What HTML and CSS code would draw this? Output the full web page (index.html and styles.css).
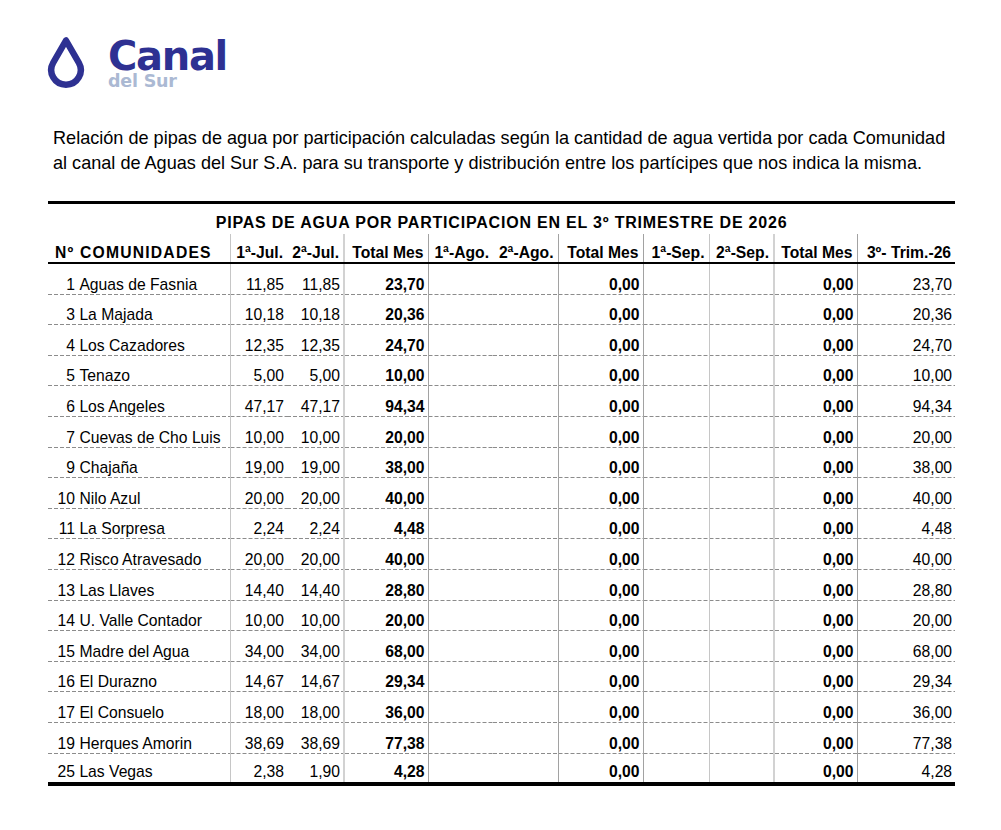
FILE: index.html
```html
<!DOCTYPE html>
<html lang="es">
<head>
<meta charset="utf-8">
<title>Canal del Sur - Pipas de agua por participación</title>
<link rel="stylesheet" href="styles.css">
</head>
<body>
<div class="page">
  <header class="logo">
    <svg class="drop" width="38" height="52" viewBox="0 0 38 52" aria-hidden="true">
      <path d="M19 3.5 L6.16 25.75 A14.75 14.75 0 1 0 31.84 25.75 Z" fill="none" stroke="#2e3192" stroke-width="6.5" stroke-linejoin="round"/>
    </svg>
    <div class="brand">
      <div class="brand-name">Canal</div>
      <div class="brand-sub">del Sur</div>
    </div>
  </header>

  <p class="intro">Relación de pipas de agua por participación calculadas según la cantidad de agua vertida por cada Comunidad<br>al canal de Aguas del Sur S.A. para su transporte y distribución entre los partícipes que nos indica la misma.</p>

  <table class="report">
    <colgroup>
      <col class="c-name"><col class="c-q"><col class="c-q"><col class="c-t">
      <col class="c-q2"><col class="c-q2"><col class="c-t2">
      <col class="c-q3"><col class="c-q2"><col class="c-t3"><col class="c-trim">
    </colgroup>
    <thead>
      <tr class="title-row"><th colspan="11">PIPAS DE AGUA POR PARTICIPACION EN EL 3º TRIMESTRE DE 2026</th></tr>
      <tr class="head-row">
        <th class="name-h">Nº COMUNIDADES</th>
        <th class="l-light">1ª-Jul.</th>
        <th>2ª-Jul.</th>
        <th class="l-thick">Total Mes</th>
        <th class="l-dark">1ª-Ago.</th>
        <th>2ª-Ago.</th>
        <th class="l-dark">Total Mes</th>
        <th class="l-dark">1ª-Sep.</th>
        <th class="l-light">2ª-Sep.</th>
        <th class="l-thick">Total Mes</th>
        <th class="l-dark">3º- Trim.-26</th>
      </tr>
    </thead>
    <tbody>
      <tr><td class="name"><span class="num">1</span>Aguas de Fasnia</td><td class="l-light">11,85</td><td>11,85</td><td class="l-thick b">23,70</td><td class="l-dark"></td><td></td><td class="l-dark b">0,00</td><td class="l-dark"></td><td class="l-light"></td><td class="l-thick b">0,00</td><td class="l-dark">23,70</td></tr>
      <tr><td class="name"><span class="num">3</span>La Majada</td><td class="l-light">10,18</td><td>10,18</td><td class="l-thick b">20,36</td><td class="l-dark"></td><td></td><td class="l-dark b">0,00</td><td class="l-dark"></td><td class="l-light"></td><td class="l-thick b">0,00</td><td class="l-dark">20,36</td></tr>
      <tr><td class="name"><span class="num">4</span>Los Cazadores</td><td class="l-light">12,35</td><td>12,35</td><td class="l-thick b">24,70</td><td class="l-dark"></td><td></td><td class="l-dark b">0,00</td><td class="l-dark"></td><td class="l-light"></td><td class="l-thick b">0,00</td><td class="l-dark">24,70</td></tr>
      <tr><td class="name"><span class="num">5</span>Tenazo</td><td class="l-light">5,00</td><td>5,00</td><td class="l-thick b">10,00</td><td class="l-dark"></td><td></td><td class="l-dark b">0,00</td><td class="l-dark"></td><td class="l-light"></td><td class="l-thick b">0,00</td><td class="l-dark">10,00</td></tr>
      <tr><td class="name"><span class="num">6</span>Los Angeles</td><td class="l-light">47,17</td><td>47,17</td><td class="l-thick b">94,34</td><td class="l-dark"></td><td></td><td class="l-dark b">0,00</td><td class="l-dark"></td><td class="l-light"></td><td class="l-thick b">0,00</td><td class="l-dark">94,34</td></tr>
      <tr><td class="name"><span class="num">7</span>Cuevas de Cho Luis</td><td class="l-light">10,00</td><td>10,00</td><td class="l-thick b">20,00</td><td class="l-dark"></td><td></td><td class="l-dark b">0,00</td><td class="l-dark"></td><td class="l-light"></td><td class="l-thick b">0,00</td><td class="l-dark">20,00</td></tr>
      <tr><td class="name"><span class="num">9</span>Chajaña</td><td class="l-light">19,00</td><td>19,00</td><td class="l-thick b">38,00</td><td class="l-dark"></td><td></td><td class="l-dark b">0,00</td><td class="l-dark"></td><td class="l-light"></td><td class="l-thick b">0,00</td><td class="l-dark">38,00</td></tr>
      <tr><td class="name"><span class="num">10</span>Nilo Azul</td><td class="l-light">20,00</td><td>20,00</td><td class="l-thick b">40,00</td><td class="l-dark"></td><td></td><td class="l-dark b">0,00</td><td class="l-dark"></td><td class="l-light"></td><td class="l-thick b">0,00</td><td class="l-dark">40,00</td></tr>
      <tr><td class="name"><span class="num">11</span>La Sorpresa</td><td class="l-light">2,24</td><td>2,24</td><td class="l-thick b">4,48</td><td class="l-dark"></td><td></td><td class="l-dark b">0,00</td><td class="l-dark"></td><td class="l-light"></td><td class="l-thick b">0,00</td><td class="l-dark">4,48</td></tr>
      <tr><td class="name"><span class="num">12</span>Risco Atravesado</td><td class="l-light">20,00</td><td>20,00</td><td class="l-thick b">40,00</td><td class="l-dark"></td><td></td><td class="l-dark b">0,00</td><td class="l-dark"></td><td class="l-light"></td><td class="l-thick b">0,00</td><td class="l-dark">40,00</td></tr>
      <tr><td class="name"><span class="num">13</span>Las Llaves</td><td class="l-light">14,40</td><td>14,40</td><td class="l-thick b">28,80</td><td class="l-dark"></td><td></td><td class="l-dark b">0,00</td><td class="l-dark"></td><td class="l-light"></td><td class="l-thick b">0,00</td><td class="l-dark">28,80</td></tr>
      <tr><td class="name"><span class="num">14</span>U. Valle Contador</td><td class="l-light">10,00</td><td>10,00</td><td class="l-thick b">20,00</td><td class="l-dark"></td><td></td><td class="l-dark b">0,00</td><td class="l-dark"></td><td class="l-light"></td><td class="l-thick b">0,00</td><td class="l-dark">20,00</td></tr>
      <tr><td class="name"><span class="num">15</span>Madre del Agua</td><td class="l-light">34,00</td><td>34,00</td><td class="l-thick b">68,00</td><td class="l-dark"></td><td></td><td class="l-dark b">0,00</td><td class="l-dark"></td><td class="l-light"></td><td class="l-thick b">0,00</td><td class="l-dark">68,00</td></tr>
      <tr><td class="name"><span class="num">16</span>El Durazno</td><td class="l-light">14,67</td><td>14,67</td><td class="l-thick b">29,34</td><td class="l-dark"></td><td></td><td class="l-dark b">0,00</td><td class="l-dark"></td><td class="l-light"></td><td class="l-thick b">0,00</td><td class="l-dark">29,34</td></tr>
      <tr><td class="name"><span class="num">17</span>El Consuelo</td><td class="l-light">18,00</td><td>18,00</td><td class="l-thick b">36,00</td><td class="l-dark"></td><td></td><td class="l-dark b">0,00</td><td class="l-dark"></td><td class="l-light"></td><td class="l-thick b">0,00</td><td class="l-dark">36,00</td></tr>
      <tr><td class="name"><span class="num">19</span>Herques Amorin</td><td class="l-light">38,69</td><td>38,69</td><td class="l-thick b">77,38</td><td class="l-dark"></td><td></td><td class="l-dark b">0,00</td><td class="l-dark"></td><td class="l-light"></td><td class="l-thick b">0,00</td><td class="l-dark">77,38</td></tr>
      <tr class="last"><td class="name"><span class="num">25</span>Las Vegas</td><td class="l-light">2,38</td><td>1,90</td><td class="l-thick b">4,28</td><td class="l-dark"></td><td></td><td class="l-dark b">0,00</td><td class="l-dark"></td><td class="l-light"></td><td class="l-thick b">0,00</td><td class="l-dark">4,28</td></tr>
    </tbody>
  </table>
</div>
</body>
</html>
```

FILE: styles.css
```css
html, body {
  margin: 0;
  padding: 0;
  background: #fff;
}

body {
  font-family: "Liberation Sans", Arial, sans-serif;
  color: #000;
}

.page {
  padding: 37px 0 0 48px;
}

/* ---------- logo ---------- */
.logo {
  display: flex;
  align-items: flex-start;
  gap: 23px;
  margin-left: -1px;
  height: 52px;
}

.drop {
  display: block;
  flex: none;
}

.brand {
  margin-top: 2px;
  font-family: "DejaVu Sans", sans-serif;
  font-weight: bold;
}

.brand-name {
  font-size: 40px;
  line-height: 34px;
  letter-spacing: -1.3px;
  color: #2e3192;
}

.brand-sub {
  font-size: 17.5px;
  line-height: 16px;
  color: #abb9d3;
  letter-spacing: -0.2px;
}

/* ---------- intro ---------- */
.intro {
  margin: 37px 0 0 5px;
  font-size: 18.1px;
  line-height: 25px;
  color: #000;
}

/* ---------- table ---------- */
.report {
  margin-top: 25px;
  width: 907px;
  table-layout: fixed;
  border-collapse: collapse;
  font-size: 15.7px;
  line-height: 18px;
}

.c-name { width: 182px; }
.c-q { width: 57px; }
.c-t { width: 84px; }
.c-q2 { width: 65px; }
.c-t2 { width: 85px; }
.c-q3 { width: 66px; }
.c-t3 { width: 83px; }
.c-trim { width: 98px; }

.report th,
.report td {
  padding: 0 3px 0 0;
  text-align: right;
  white-space: nowrap;
  vertical-align: bottom;
}

.title-row th {
  border-top: 3px solid #000;
  height: 28px;
  padding: 0 0 2px 0;
  text-align: center;
  font-size: 16px;
  letter-spacing: 0.8px;
}

.head-row th {
  height: 28px;
  padding: 0 4px 0 0;
  font-size: 15.7px;
  border-bottom: 2px solid #000;
}

.head-row th.name-h {
  text-align: left;
  padding-left: 7px;
  letter-spacing: 1.2px;
}

.report td {
  height: 29.6px;
  padding-bottom: 1px;
  background-image: linear-gradient(90deg, #8c8c8c 4px, transparent 4px);
  background-size: 6px 1px;
  background-repeat: repeat-x;
  background-position: left bottom;
}

.report tr.last td {
  height: 27.8px;
  padding-bottom: 0.6px;
  background-image: none;
  border-bottom: 4px solid #000;
}

.report td.name {
  text-align: left;
  padding-left: 5px;
}

.num {
  display: inline-block;
  width: 22px;
  margin-right: 4.4px;
  text-align: right;
}

.b {
  font-weight: bold;
}

.l-light { border-left: 1px solid #c6c6c6; }
.l-dark { border-left: 1px solid #a2a2a2; }
.l-thick { border-left: 2px solid #d2d2d2; }
```
